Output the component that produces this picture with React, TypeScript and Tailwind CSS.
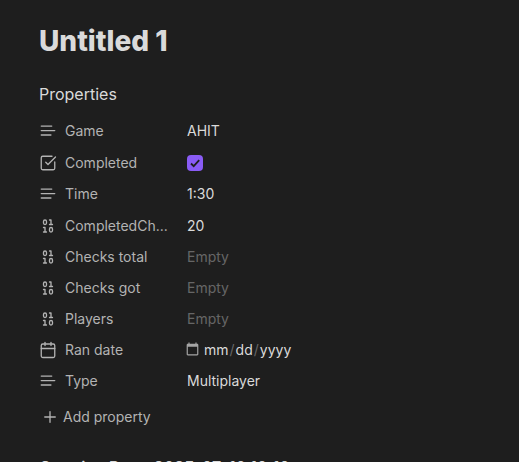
import { useState } from "react";
import type { ReactNode } from "react";
import { Calendar, Plus, SquareCheckBig } from "lucide-react";

function TextIcon() {
    return (
        <svg className="size-[18px]" viewBox="0 0 24 24" fill="none" stroke="currentColor" strokeWidth="1.75" strokeLinecap="round">
            <path d="M17 5.4H3M21 11.4H3M15.9 17.3H3" />
        </svg>
    );
}

function NumberIcon() {
    return (
        <svg className="size-[18px]" viewBox="0 0 24 24" fill="none" stroke="currentColor" strokeWidth="1.75" strokeLinecap="round" strokeLinejoin="round">
            <rect x="6" y="4" width="4" height="6" rx="2" />
            <rect x="14" y="14" width="4" height="6" rx="2" />
            <path d="M6 20h4M14 10h4M6 14h2v6M14 4h2v6" />
        </svg>
    );
}

const icons: Record<string, ReactNode> = {
    text: <TextIcon />,
    number: <NumberIcon />,
    checkbox: <SquareCheckBig size={18} strokeWidth={1.75} />,
    date: <Calendar size={18} strokeWidth={1.75} />,
};

const properties = [
    { id: "game", label: "Game", type: "text", value: "AHIT" },
    { id: "completed", label: "Completed", type: "checkbox", value: "" },
    { id: "time", label: "Time", type: "text", value: "1:30" },
    { id: "completed-checks", label: "CompletedCh...", type: "number", value: "20" },
    { id: "checks-total", label: "Checks total", type: "number", value: "" },
    { id: "checks-got", label: "Checks got", type: "number", value: "" },
    { id: "players", label: "Players", type: "number", value: "" },
    { id: "ran-date", label: "Ran date", type: "date", value: "" },
    { id: "type", label: "Type", type: "text", value: "Multiplayer" },
];

function PropertyValue({ id, type, value }: { id: string; type: string; value: string }) {
    const [checked, setChecked] = useState(true);

    if (type === "checkbox") {
        return (
            <span className="relative flex size-4">
                <input
                    id={id}
                    type="checkbox"
                    checked={checked}
                    onChange={(e) => setChecked(e.target.checked)}
                    className="peer size-4 appearance-none rounded border border-[#666666] checked:border-0 checked:bg-[#8a5cf5]"
                />
                <svg className="pointer-events-none absolute inset-0 hidden size-4 peer-checked:block" viewBox="0 0 16 16" fill="none" stroke="#1e1e1e" strokeWidth="1.8">
                    <path d="M4 8.5l2.7 2.7L12.2 5.2" />
                </svg>
            </span>
        );
    }

    if (type === "date") {
        return (
            <input
                id={id}
                type="date"
                defaultValue={value}
                className="-ml-0.5 h-5 bg-transparent scheme-dark [&::-webkit-calendar-picker-indicator]:order-first [&::-webkit-calendar-picker-indicator]:mr-[3px] [&::-webkit-calendar-picker-indicator]:ml-0 [&::-webkit-calendar-picker-indicator]:size-[15px] [&::-webkit-calendar-picker-indicator]:p-0 [&::-webkit-calendar-picker-indicator]:opacity-60 [&::-webkit-datetime-edit-text]:text-[#666666]"
            />
        );
    }

    return (
        <input
            id={id}
            type="text"
            defaultValue={value}
            placeholder="Empty"
            className="w-full bg-transparent outline-none placeholder:text-[#666666]"
        />
    );
}

export default function App() {
    return (
        <div className="h-screen overflow-hidden bg-[#1e1e1e] px-[39px] pt-[23px] font-['Inter',sans-serif] text-[#dadada]">
            <h1 className="text-[28px] leading-9 font-extrabold">Untitled 1</h1>

            <h2 className="mt-[23px] text-base leading-6">Properties</h2>

            {/* Note properties */}
            <div className="mt-[9px] text-sm">
                {properties.map((p) => (
                    <div key={p.id} className={p.type === "text" ? "flex h-8 items-center" : "flex h-[31px] items-center"}>
                        <label htmlFor={p.id} className="flex w-[148px] shrink-0 items-center gap-2 text-[#b3b3b3]">
                            {icons[p.type]}
                            <span>{p.label}</span>
                        </label>
                        <PropertyValue id={p.id} type={p.type} value={p.value} />
                    </div>
                ))}
            </div>

            <button className="mt-1.5 flex h-7 items-center gap-1 pl-[2px] text-sm text-[#b3b3b3]">
                <Plus size={18} strokeWidth={1.75} />
                Add property
            </button>

            {/* Note body */}
            <p className="mt-6 text-base leading-6 font-semibold whitespace-nowrap">Creation Date: 2025-07-10 10:10</p>
        </div>
    );
}
